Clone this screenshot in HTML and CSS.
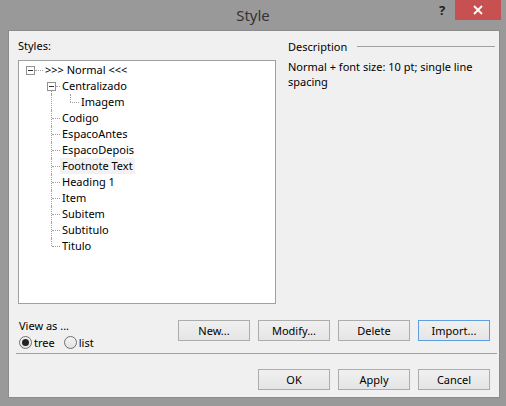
FILE: index.html
```html
<!DOCTYPE html>
<html>
<head>
<meta charset="utf-8">
<title>Style</title>
<link rel="stylesheet" href="styles.css">
</head>
<body>
<div class="window">
  <div class="titlebar">
    <div class="tb-side"></div>
    <div class="title">Style</div>
    <div class="tb-side tb-right">
      <div class="help">?</div>
      <div class="close"><svg width="10" height="10" viewBox="0 0 10 10"><path d="M1 1L9 9M9 1L1 9" stroke="#fff" stroke-width="1.8"/></svg></div>
    </div>
  </div>
  <div class="client">
    <div class="top">
      <div class="left">
        <div class="caption">Styles:</div>
        <div class="tree">
          <div class="row lv0"><span class="exp"></span><span class="dash d0"></span><span class="item">&gt;&gt;&gt; Normal &lt;&lt;&lt;</span></div>
          <div class="row lv1e"><span class="exp"></span><span class="dash d1e"></span><span class="item">Centralizado</span></div>
          <div class="row lv2"><span class="dash d2"></span><span class="item">Imagem</span></div>
          <div class="row lv1"><span class="dash d1"></span><span class="item">Codigo</span></div>
          <div class="row lv1"><span class="dash d1"></span><span class="item">EspacoAntes</span></div>
          <div class="row lv1"><span class="dash d1"></span><span class="item">EspacoDepois</span></div>
          <div class="row lv1"><span class="dash d1"></span><span class="item sel">Footnote Text</span></div>
          <div class="row lv1"><span class="dash d1"></span><span class="item">Heading 1</span></div>
          <div class="row lv1"><span class="dash d1"></span><span class="item">Item</span></div>
          <div class="row lv1"><span class="dash d1"></span><span class="item">Subitem</span></div>
          <div class="row lv1"><span class="dash d1"></span><span class="item">Subtitulo</span></div>
          <div class="row lv1 last"><span class="dash d1"></span><span class="item">Titulo</span></div>
        </div>
      </div>
      <div class="right">
        <div class="group-head"><span>Description</span><span class="rule"></span></div>
        <p class="desc">Normal + font size: 10 pt; single line spacing</p>
      </div>
    </div>
    <div class="actions">
      <div class="viewas">
        <div class="va-label">View as ...</div>
        <div class="radios">
          <span class="radio checked"></span><span class="rlabel">tree</span>
          <span class="radio"></span><span class="rlabel">list</span>
        </div>
      </div>
      <div class="btns">
        <button class="btn">New...</button>
        <button class="btn">Modify...</button>
        <button class="btn">Delete</button>
        <button class="btn focus">Import...</button>
      </div>
    </div>
    <div class="sep"></div>
    <div class="footer">
      <button class="btn">OK</button>
      <button class="btn">Apply</button>
      <button class="btn">Cancel</button>
    </div>
  </div>
</div>
</body>
</html>
```
FILE: styles.css
```css
* { box-sizing: border-box; }
html, body { margin: 0; padding: 0; }
body {
  width: 506px;
  height: 406px;
  overflow: hidden;
  font-family: "Noto Sans", "Open Sans", sans-serif;
  font-size: 11px;
  color: #000;
}
.window {
  width: 506px;
  height: 406px;
  background: #999999;
  display: flex;
  flex-direction: column;
}
.titlebar {
  height: 30px;
  display: grid;
  grid-template-columns: 1fr auto 1fr;
}
.title {
  font-size: 15px;
  line-height: 30px;
  color: #333;
}
.tb-right {
  display: flex;
  justify-content: flex-end;
  align-items: flex-start;
  padding-right: 5px;
}
.help {
  width: 26px;
  height: 20px;
  line-height: 20px;
  text-align: center;
  font-weight: bold;
  font-size: 13px;
  color: #222;
}
.close {
  width: 46px;
  height: 20px;
  background: #c75050;
  display: flex;
  align-items: center;
  justify-content: center;
}
.close svg { display: block; }
.client {
  margin: 0 6px 0 8px;
  height: 368px;
  background: #f0f0f0;
  border: 1px solid #8c8c8c;
  padding: 7px 4px 0 9px;
}
.top {
  display: grid;
  grid-template-columns: 258px 1fr;
  column-gap: 12px;
}
.caption {
  height: 16px;
  line-height: 16px;
}
.tree {
  margin-top: 6px;
  height: 244px;
  background: #fff;
  border: 1px solid #a0a0a0;
  padding-top: 1px;
}
.row {
  height: 16px;
  display: flex;
  align-items: center;
  position: relative;
}
.item {
  height: 16px;
  line-height: 16px;
  padding: 0 2px;
  white-space: nowrap;
}
.item.sel { background: #f2f2f2; }
.exp {
  width: 9px;
  height: 9px;
  border: 1px solid #919191;
  background: #fff;
  position: relative;
}
.exp::after {
  content: "";
  position: absolute;
  left: 1px;
  top: 3px;
  width: 5px;
  height: 1px;
  background: #333;
}
.dash {
  height: 1px;
  border-top: 1px dotted #a0a0a0;
}
.lv0 { padding-left: 7px; }
.d0 { width: 8px; }
.lv1e { padding-left: 28px; }
.d1e { width: 4px; }
.lv1 { padding-left: 33px; }
.d1 { width: 8px; }
.lv2 { padding-left: 51px; }
.d2 { width: 9px; }
.lv1e::before,
.lv1::before,
.lv2::before {
  content: "";
  position: absolute;
  left: 32px;
  border-left: 1px dotted #a0a0a0;
}
.lv1e::before { top: 13px; bottom: 0; }
.lv1::before, .lv2::before { top: 0; bottom: 0; }
.lv1.last::before { bottom: 8px; }
.lv2::after {
  content: "";
  position: absolute;
  left: 51px;
  top: 0;
  height: 8px;
  border-left: 1px dotted #a0a0a0;
}
.group-head {
  height: 16px;
  display: flex;
  align-items: center;
}
.rule {
  flex: 1;
  height: 1px;
  background: #a0a0a0;
  margin-left: 10px;
}
.desc {
  margin: 5px 0 0 0;
  line-height: 15px;
  width: 185px;
}
.actions {
  margin-top: 14px;
  height: 32px;
  display: flex;
  justify-content: space-between;
  padding-right: 5px;
}
.viewas { padding-left: 1px; }
.va-label { height: 16px; line-height: 16px; }
.radios {
  height: 16px;
  display: flex;
  align-items: center;
}
.radio {
  width: 13px;
  height: 13px;
  border-radius: 50%;
  border: 1px solid #707070;
  background: linear-gradient(#f4f4f4, #e2e2e2);
  display: flex;
  align-items: center;
  justify-content: center;
}
.radio.checked::after {
  content: "";
  width: 7px;
  height: 7px;
  border-radius: 50%;
  background: #222;
}
.rlabel { margin: 0 9px 0 2px; }
.btns {
  display: flex;
  gap: 8px;
  padding-top: 2px;
}
.btn {
  width: 72px;
  height: 21px;
  font: inherit;
  color: #000;
  border: 1px solid #acacac;
  background: linear-gradient(#f0f0f0, #e5e5e5);
  padding: 0;
  margin: 0;
}
.btn.focus { border-color: #5f9ee0; }
.sep {
  margin: 3px 0 0 -2px;
  width: 481px;
  height: 1px;
  background: #a0a0a0;
}
.footer {
  margin-top: 15px;
  display: flex;
  justify-content: flex-end;
  gap: 8px;
  padding-right: 5px;
}
```
